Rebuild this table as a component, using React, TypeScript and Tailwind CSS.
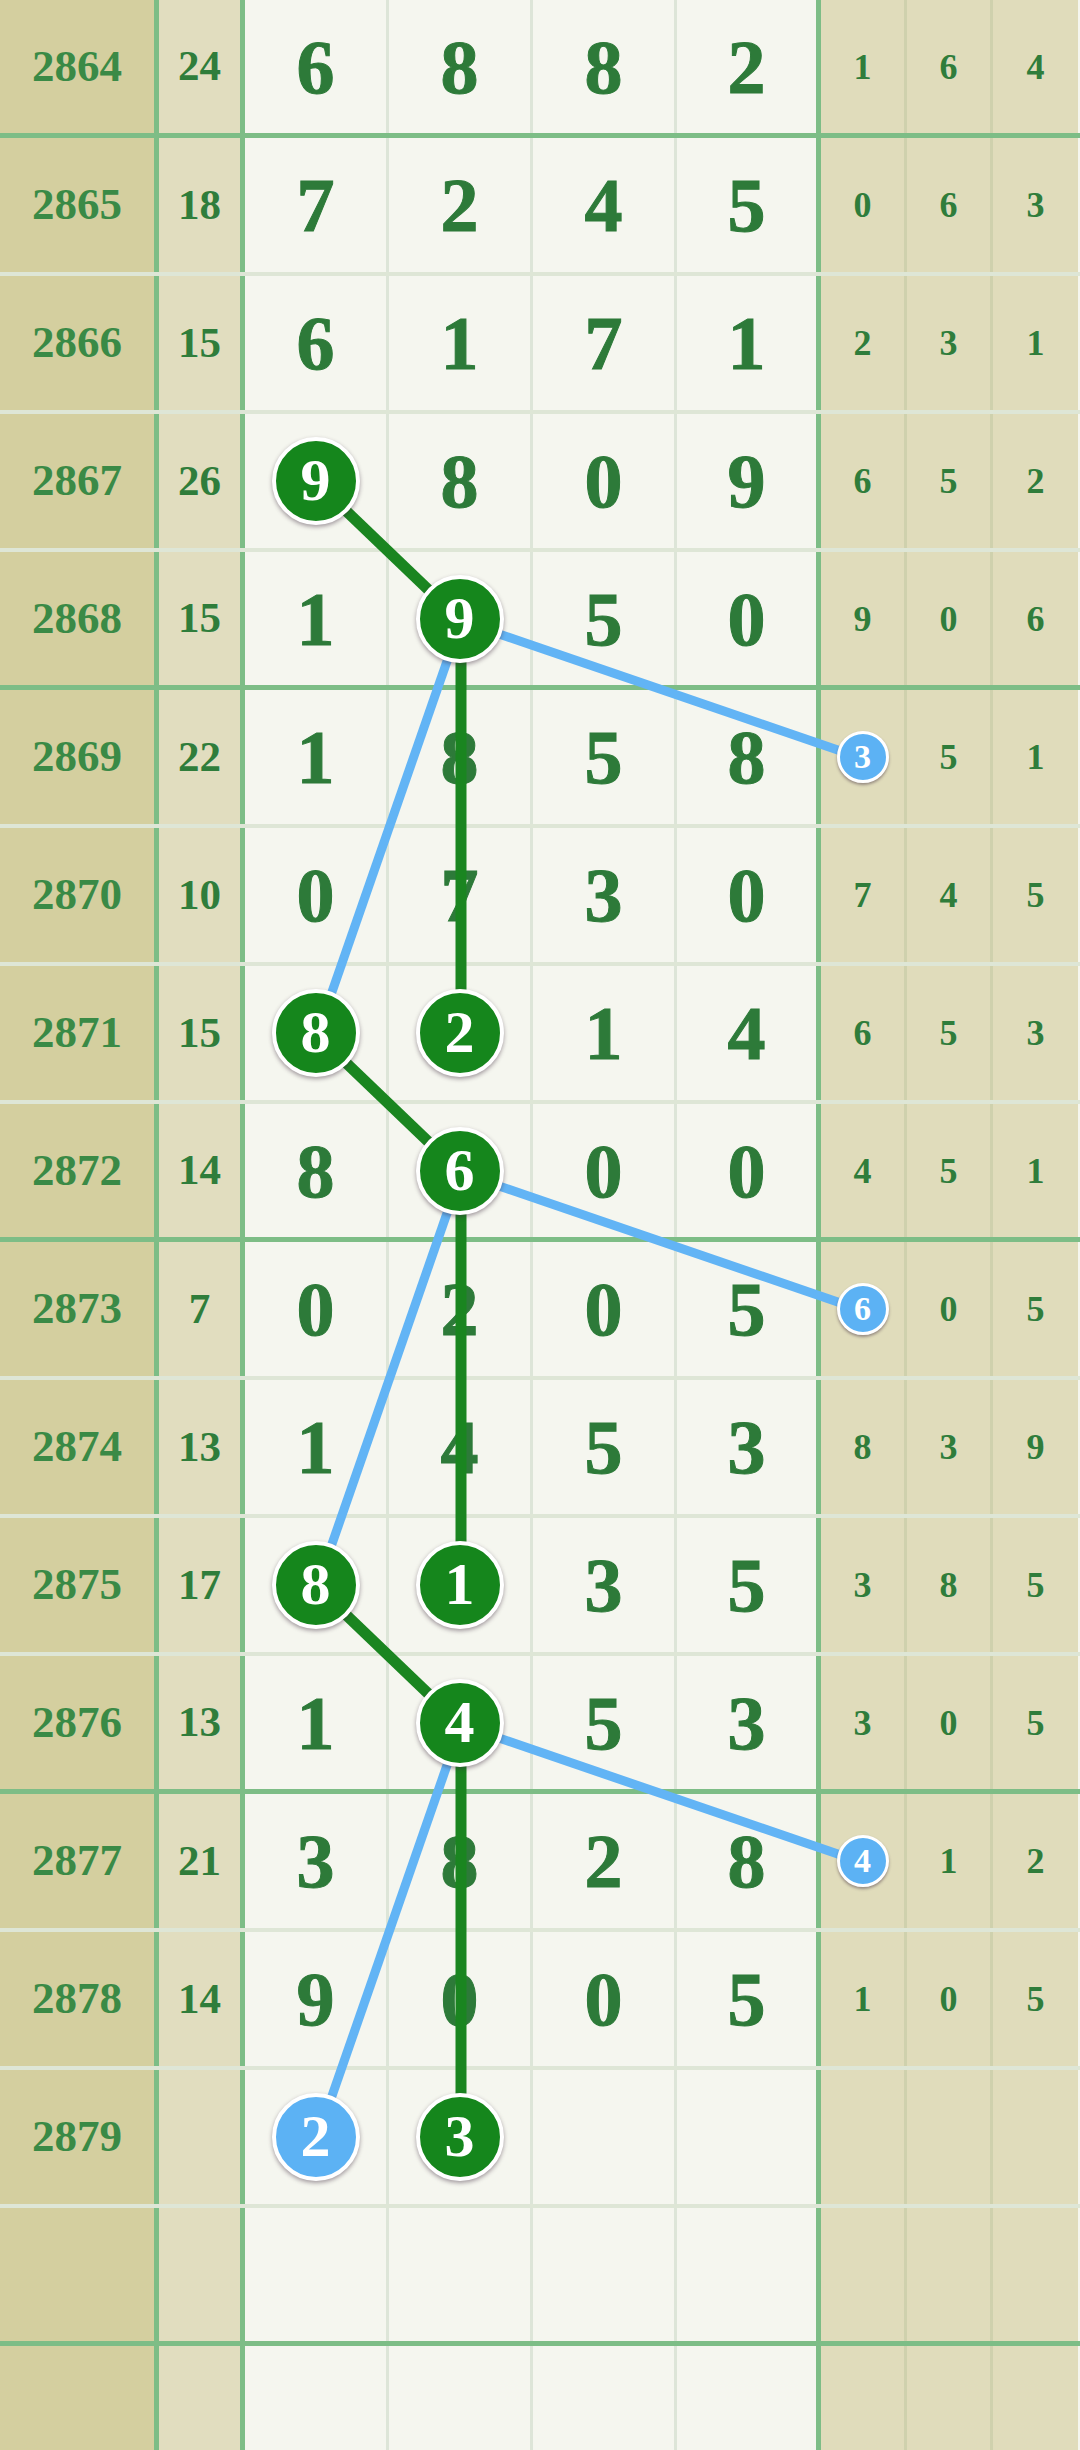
import * as React from 'react';

type Row = { no: string; sum: string; main: number[]; tail: number[] };

const raw: [string, string, string, string][] = [
  ['2864', '24', '6882', '164'],
  ['2865', '18', '7245', '063'],
  ['2866', '15', '6171', '231'],
  ['2867', '26', '9809', '652'],
  ['2868', '15', '1950', '906'],
  ['2869', '22', '1858', '351'],
  ['2870', '10', '0730', '745'],
  ['2871', '15', '8214', '653'],
  ['2872', '14', '8600', '451'],
  ['2873', '7', '0205', '605'],
  ['2874', '13', '1453', '839'],
  ['2875', '17', '8135', '385'],
  ['2876', '13', '1453', '305'],
  ['2877', '21', '3828', '412'],
  ['2878', '14', '9005', '105'],
];

const rows: Row[] = raw.map(([no, sum, m, t]) => ({
  no, sum, main: m.split('').map(Number), tail: t.split('').map(Number),
}));

// marked balls in the main area: row index -> col index -> kind
const balls: Record<string, 'g' | 'b'> = {
  '3-0': 'g', '4-1': 'g', '7-0': 'g', '7-1': 'g', '8-1': 'g',
  '11-0': 'g', '11-1': 'g', '12-1': 'g', '15-0': 'b', '15-1': 'g',
};
const tailBalls: Record<number, boolean> = { 5: true, 9: true, 13: true };

const RH = 138;
const colX = [317, 461, 605, 749];
const tailX = 864;
const cy = (i: number) => i * RH + 69;

const greenLines: [number, number, number, number][] = [
  [colX[0], cy(3), colX[1], cy(4)],
  [colX[1], cy(4), colX[1], cy(7)],
  [colX[0], cy(7), colX[1], cy(8)],
  [colX[1], cy(8), colX[1], cy(11)],
  [colX[0], cy(11), colX[1], cy(12)],
  [colX[1], cy(12), colX[1], cy(15)],
];
const blueLines: [number, number, number, number][] = [
  [colX[1], cy(4), tailX, cy(5)],
  [colX[1], cy(4), colX[0], cy(7)],
  [colX[1], cy(8), tailX, cy(9)],
  [colX[1], cy(8), colX[0], cy(11)],
  [colX[1], cy(12), tailX, cy(13)],
  [colX[1], cy(12), colX[0], cy(15)],
];

const serif = { fontFamily: '"Liberation Serif", "Times New Roman", serif' };

function Ball({ value, kind }: { value: number | string; kind: 'g' | 'b' }) {
  return (
    <div
      className={`relative z-20 w-[88px] h-[88px] rounded-full border-[4px] border-white flex items-center justify-center text-white font-bold text-[60px] leading-none [-webkit-text-stroke:0] shadow-[0_2px_4px_rgba(60,40,60,0.45)] ${kind === 'g' ? 'bg-[#15861c]' : 'bg-[#5cb2f4]'}`}
      style={serif}
    >
      <span className="-mt-[2px]">{value}</span>
    </div>
  );
}

function SmallBall({ value }: { value: number }) {
  return (
    <div
      className="relative z-20 w-[52px] h-[52px] rounded-full border-[3px] border-white bg-[#5cb2f4] flex items-center justify-center text-white font-bold text-[34px] leading-none shadow-[0_2px_3px_rgba(60,40,60,0.45)]"
      style={serif}
    >
      {value}
    </div>
  );
}

function ChartRow({ i, row }: { i: number; row?: Row }) {
  const thick = i % 4 === 0;
  const rb = thick ? 'border-b-[5px] border-b-[#7dbd86]' : 'border-b-[4px] border-b-[rgba(120,160,100,0.18)]';
  const last = i === 15;
  return (
    <div className={`flex h-[138px] shrink-0 ${rb}`}>
      <div className="w-[159px] shrink-0 h-full flex items-center justify-center bg-[#d4cf9f] border-r-[5px] border-r-[#7dbd86] text-[45px] font-bold text-[#3a8a46]">
        {last ? '2879' : row?.no}
      </div>
      <div className="w-[86px] shrink-0 h-full flex items-center justify-center bg-[#e1ddbf] border-r-[5px] border-r-[#7dbd86] text-[43px] font-bold text-[#2f7d3b]">
        {row?.sum}
      </div>
      {[0, 1, 2, 3].map((c) => {
        const k = balls[`${i}-${c}`];
        const v = last ? (c === 0 ? 2 : c === 1 ? 3 : null) : row?.main[c];
        return (
          <div
            key={c}
            className={`w-[144px] shrink-0 h-full flex items-center justify-center bg-[#f5f6ef] ${c < 3 ? 'border-r-[3px] border-r-[#dde5d8]' : 'border-r-[5px] border-r-[#7dbd86]'} text-[76px] font-bold text-[#2d7a39] leading-none`}
          >
            {k && v !== null && v !== undefined ? (
              <Ball value={v} kind={k} />
            ) : (
              <span className="[-webkit-text-stroke:1px_#2d7a39]">{v}</span>
            )}
          </div>
        );
      })}
      {[0, 1, 2].map((c) => {
        const v = row?.tail[c];
        return (
          <div
            key={c}
            className={`${c === 2 ? 'w-[85px]' : 'w-[86px]'} shrink-0 h-full flex items-center justify-center bg-[#e0dcbb] ${c < 2 ? 'border-r-[3px] border-r-[#cfd1ad]' : ''} text-[36px] font-bold text-[#2f7d3b] leading-none`}
          >
            {c === 0 && tailBalls[i] && v !== undefined ? <SmallBall value={v} /> : v}
          </div>
        );
      })}
    </div>
  );
}

export default function App() {
  const all = Array.from({ length: 18 }, (_, i) => i);
  return (
    <div className="relative w-[1080px] h-[2450px] overflow-hidden bg-[#f5f6ef]" style={serif}>
      <div className="flex flex-col">
        {all.map((i) => (
          <ChartRow key={i} i={i} row={rows[i]} />
        ))}
      </div>
      <svg className="absolute inset-0 z-10 pointer-events-none" width={1080} height={2450}>
        {greenLines.map(([x1, y1, x2, y2], k) => (
          <line key={`g${k}`} x1={x1} y1={y1} x2={x2} y2={y2} stroke="#1a8520" strokeWidth={11} />
        ))}
        {blueLines.map(([x1, y1, x2, y2], k) => (
          <line key={`b${k}`} x1={x1} y1={y1} x2={x2} y2={y2} stroke="#62b4f5" strokeWidth={9} />
        ))}
      </svg>
    </div>
  );
}
